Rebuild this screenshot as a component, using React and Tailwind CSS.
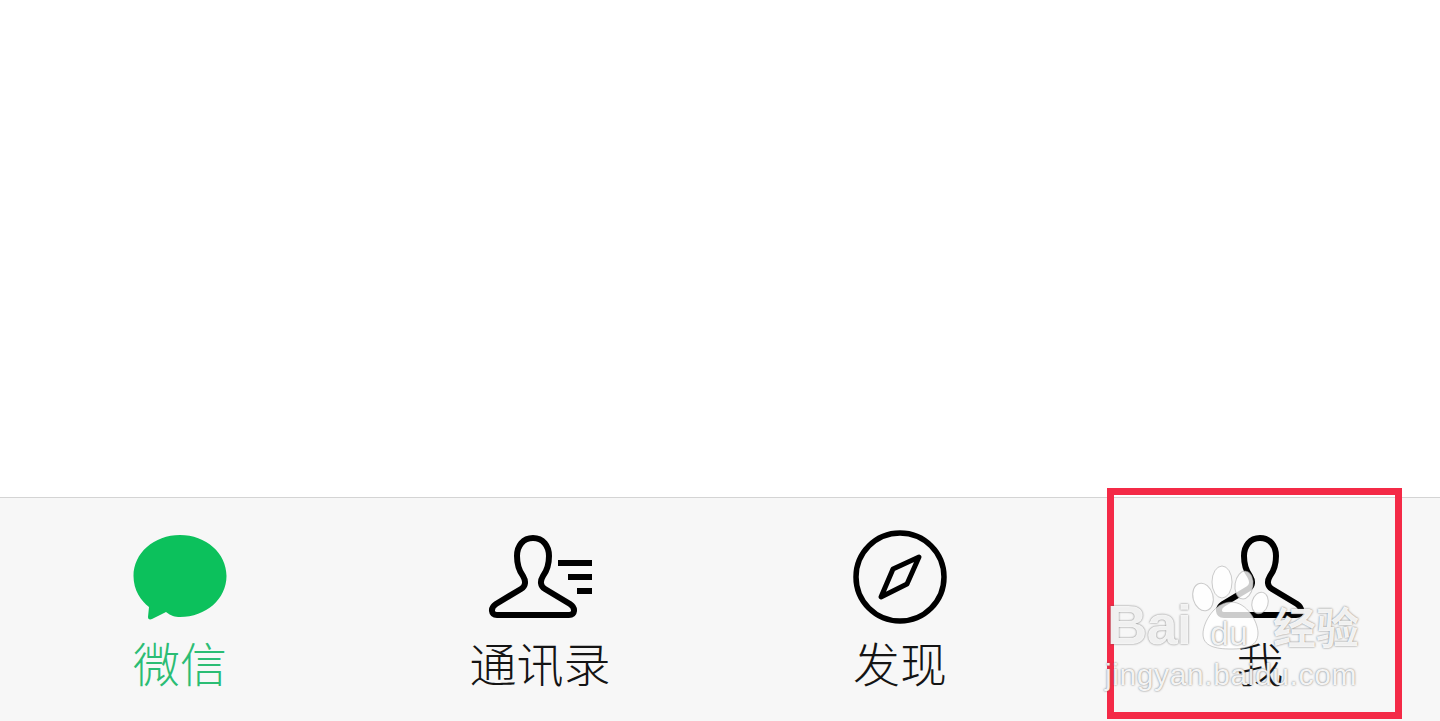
const labelFont = '[font-family:"Noto_Sans_CJK_SC","Noto_Sans",sans-serif]'

function Person() {
  return (
    <path
      d="M45 3C35 3 29 11 29 21C29 30 32 37 35 41C38 46 38 51 33 54L8 69C2 73 3 80 9 80H81C87 80 88 73 82 69L57 54C52 51 52 46 55 41C58 37 61 30 61 21C61 11 55 3 45 3Z"
      fill="none"
      stroke="#000"
      strokeWidth="6"
      strokeLinejoin="round"
    />
  )
}

function ChatIcon() {
  return (
    <svg width="94" height="94" viewBox="0 0 94 94">
      <path
        d="M47 5C21 5 0.500 23 0.500 46C0.500 60 8 71 16 77L15 87C15 89.500 17 90 19 89L33 82C38 86 42 87 47 87C73 87 93.500 69 93.500 46C93.500 23 73 5 47 5Z"
        fill="#0cc15c"
      />
    </svg>
  )
}

function ContactsIcon() {
  return (
    <svg width="104" height="94" viewBox="0 -5 104 94">
      <Person />
      <path d="M70 28H104M80 42H104M89 56H104" fill="none" stroke="#000" strokeWidth="6" />
    </svg>
  )
}

function CompassIcon() {
  return (
    <svg width="94" height="94" viewBox="0 0 94 94">
      <circle cx="47" cy="47" r="44" fill="none" stroke="#000" strokeWidth="5.500" />
      <path d="M66 27L54 54L28 67L40 39Z" fill="none" stroke="#000" strokeWidth="5" strokeLinejoin="round" />
    </svg>
  )
}

function MeIcon() {
  return (
    <svg width="90" height="94" viewBox="0 -5 90 94">
      <Person />
    </svg>
  )
}

const tabs = [
  { label: '微信', icon: <ChatIcon />, color: 'text-[#2bbd74]' },
  { label: '通讯录', icon: <ContactsIcon />, color: 'text-[#141414]' },
  { label: '发现', icon: <CompassIcon />, color: 'text-[#141414]' },
  { label: '我', icon: <MeIcon />, color: 'text-[#141414]' },
]

function Watermark() {
  return (
    <div className="absolute left-[1105px] top-[560px] flex h-[132px] w-[262px] flex-col text-white/90 font-['Liberation_Sans',sans-serif] [text-shadow:0_0_2px_rgba(90,90,90,0.9)]">
      <svg className="absolute left-0 top-0" width="262" height="100" viewBox="0 0 262 100">
        <g fill="#fff" fillOpacity="0.8" stroke="#999" strokeOpacity="0.5">
          <ellipse cx="98" cy="37" rx="10" ry="14" transform="rotate(-15 98 37)" />
          <ellipse cx="117" cy="22" rx="10" ry="16" />
          <ellipse cx="139" cy="25" rx="9" ry="14" transform="rotate(8 139 25)" />
          <ellipse cx="155" cy="43" rx="8" ry="11" transform="rotate(15 155 43)" />
          <path d="M126 42C110 42 98 62 98 74C98 86 110 89 126 89C142 89 153 86 153 73C153 62 142 42 126 42Z" />
        </g>
      </svg>
      <div className="relative mt-[38px] flex h-[54px] items-center">
        <span className="ml-[2px] w-[103px] text-[56px] leading-[54px] font-bold tracking-[-1px]">Bai</span>
        <span className="mt-[16px] w-[63px] text-[34px] leading-[40px] text-[#f2f2f2]">du</span>
        <span className={`text-[43px] leading-[50px] font-bold ${labelFont}`}>经验</span>
      </div>
      <span className="relative mt-[5px] text-[30px] leading-[36px] tracking-[0.6px]">jingyan.baidu.com</span>
    </div>
  )
}

export default function App() {
  return (
    <div className="relative flex h-[721px] flex-col overflow-hidden bg-white">
      <div className="flex-1" />
      <nav className="grid h-[224px] grid-cols-4 border-t border-[#d4d4d4] bg-[#f7f7f7] pt-8">
        {tabs.map((tab) => (
          <div key={tab.label} className="flex flex-col items-center">
            <div className="flex h-[94px] items-center justify-center">{tab.icon}</div>
            <span className={`mt-[13px] text-[47px] leading-[50px] font-light ${labelFont} ${tab.color}`}>{tab.label}</span>
          </div>
        ))}
      </nav>
      <div className="absolute left-[1107px] top-[488px] h-[231px] w-[295px] border-[7px] border-[#f42a47]" />
      <Watermark />
    </div>
  )
}
